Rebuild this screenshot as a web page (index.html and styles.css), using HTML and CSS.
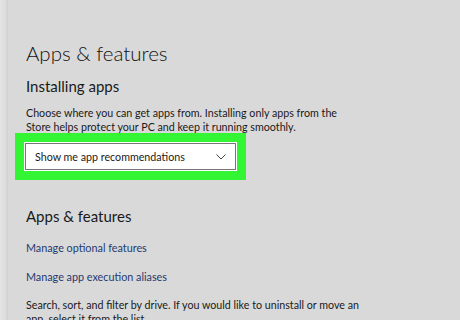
FILE: index.html
```html
<!DOCTYPE html>
<html>
<head>
<meta charset="utf-8">
<link rel="stylesheet" href="styles.css">
</head>
<body>
<div class="window">
  <div class="sidebar"></div>
  <main class="content">
    <h1 class="title">Apps &amp; features</h1>
    <h2 class="subtitle">Installing apps</h2>
    <p class="desc">Choose where you can get apps from. Installing only apps from the<br>Store helps protect your PC and keep it running smoothly.</p>
    <div class="highlight">
      <div class="select">
        <span>Show me app recommendations</span>
        <svg class="chev" width="10" height="6" viewBox="0 0 10 6"><path d="M0.5 0.5 L5 5 L9.5 0.5" fill="none" stroke="#444" stroke-width="1"/></svg>
      </div>
    </div>
    <h2 class="section">Apps &amp; features</h2>
    <a class="link">Manage optional features</a>
    <a class="link">Manage app execution aliases</a>
    <p class="desc2">Search, sort, and filter by drive. If you would like to uninstall or move an<br>app, select it from the list.</p>
  </main>
</div>
</body>
</html>
```
FILE: styles.css
```css
html, body { margin: 0; padding: 0; }
body {
  width: 460px; height: 320px; overflow: hidden;
  background: #d9d9d9;
  font-family: Lato, "Noto Sans", sans-serif;
  color: #1a1a1a;
}
.window { display: flex; height: 320px; }
.sidebar {
  width: 8px; flex: none;
  background: linear-gradient(to right, #e4e4e4, #dcdcdc 70%, #cfcfcf);
}
.content { flex: 1; padding-left: 18px; display: flex; flex-direction: column; align-items: flex-start; }
.title {
  margin: 38px 0 0; font-size: 20.5px; font-weight: 300; line-height: 30px; color: #111;
}
.subtitle {
  margin: 7px 0 0; font-size: 15px; font-weight: 400; line-height: 22px;
}
.desc {
  margin: 9px 0 0; font-size: 10.7px; line-height: 14px; white-space: nowrap;
}
.highlight {
  margin: -1px 0 0 -11px; padding: 10px; background: #33f533; width: 211px;
}
.select {
  height: 25px; background: #fff; border: 1px solid #777; box-shadow: 0 0 0 1px #fff;
  display: flex; align-items: center; justify-content: space-between;
  padding: 0 9px 0 9px; font-size: 10.7px;
}
.section {
  margin: 25px 0 0; font-size: 15px; font-weight: 400; line-height: 22px;
}
.link {
  color: #1f3a70; font-size: 10.8px; line-height: 16px;
}
.section + .link { margin-top: 13px; }
.link + .link { margin-top: 13px; }
.desc2 {
  margin: 13px 0 0; font-size: 10.7px; line-height: 14px; white-space: nowrap;
}
```
